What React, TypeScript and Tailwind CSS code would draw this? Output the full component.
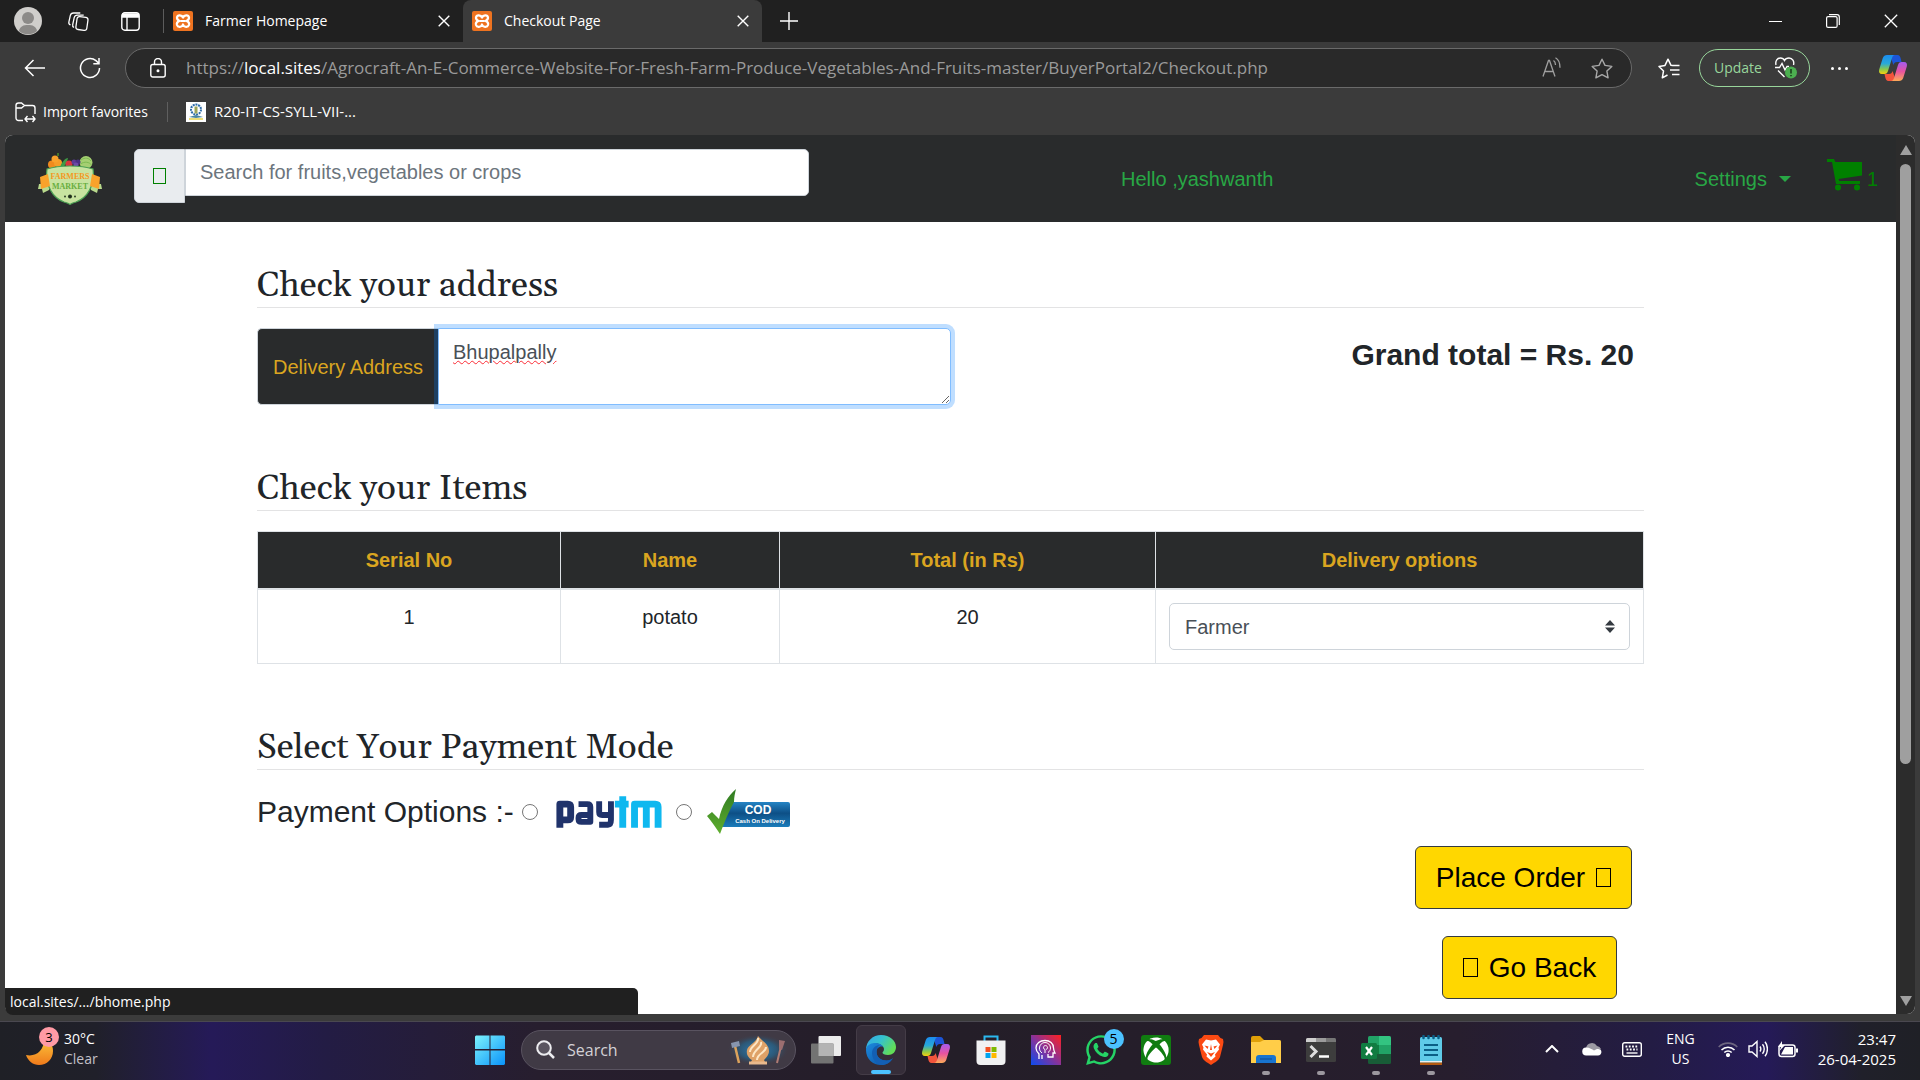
import React from "react";
import { FaWhatsapp, FaXbox } from "react-icons/fa";

const ui = "font-['Open_Sans',sans-serif]";

const TofuBox = ({ className }: { className: string }) => (
  <span aria-hidden="true" className={`inline-block shrink-0 border ${className}`} />
);

const XamppIcon = () => (
  <svg className="shrink-0" width="20" height="20" viewBox="0 0 20 20">
    <rect width="20" height="20" rx="2" fill="#ee7320" />
    <path
      d="M10 6.500C9 4 4.500 3.500 4 6.500 3.800 8.500 5.500 9.500 6.500 10 4.500 10.500 3.500 12 4 14c.7 2.500 5 2.500 6-.5 1 3 5.300 3 6 .5.500-2-.5-3.500-2.500-4 1-.5 2.700-1.500 2.500-3.500C15.500 3.500 11 4 10 6.500zM7.500 10h5"
      fill="none"
      stroke="#fff"
      strokeWidth="2.200"
      strokeLinejoin="round"
    />
  </svg>
);

const CloseX = ({ size = 12, width = 1.4 }: { size?: number; width?: number }) => (
  <svg width={size} height={size} viewBox="0 0 12 12" stroke="#fff" strokeWidth={width} fill="none">
    <path d="M.7.7l10.6 10.6M11.3.7L.7 11.3" />
  </svg>
);

const Copilot = ({ id }: { id: string }) => (
  <svg width="30" height="30" viewBox="0 0 30 30">
    <defs>
      <linearGradient id={`${id}a`} x1="0" y1="0" x2="0" y2="1">
        <stop offset="0" stopColor="#1b8cf0" />
        <stop offset=".45" stopColor="#28a9d8" />
        <stop offset=".75" stopColor="#8ac94b" />
        <stop offset="1" stopColor="#f7cf0d" />
      </linearGradient>
      <linearGradient id={`${id}b`} x1="0" y1="0" x2="0" y2="1">
        <stop offset="0" stopColor="#a45bf0" />
        <stop offset=".5" stopColor="#e8539f" />
        <stop offset="1" stopColor="#fdaa58" />
      </linearGradient>
    </defs>
    <path d="M13 2h6.500c2 0 2.600 1.500 3.200 3.500L23.500 9H19c-2 0-3 1-3.600 3L13 5z" fill="#1c55d8" />
    <path d="M17 28h-6.500c-2 0-2.600-1.500-3.200-3.500L6.500 21H11c2 0 3-1 3.600-3L17 25z" fill="#f2543c" />
    <path d="M9 2h8c-1.500 0-2.400 1.200-3 3l-4 13c-.6 2-1.600 3-3.500 3H4c-2.500 0-3.500-2-2.800-4.500l3.600-11.500C5.500 3 7 2 9 2z" fill={`url(#${id}a)`} />
    <path d="M21 28h-8c1.500 0 2.400-1.200 3-3l4-13c.6-2 1.600-3 3.500-3H26c2.500 0 3.500 2 2.800 4.500L25.200 25c-.7 2-2.200 3-4.200 3z" fill={`url(#${id}b)`} />
  </svg>
);

const Tab = ({ title, active }: { title: string; active?: boolean }) => (
  <div
    className={`flex h-full w-[299px] items-center pr-[11px] pl-[9px] text-white ${
      active ? "rounded-t-lg bg-[#3b3b3b]" : ""
    }`}
  >
    <XamppIcon />
    <span className="ml-3 flex-1 text-sm">{title}</span>
    <button aria-label={`Close ${title}`} className="flex size-4 items-center justify-center">
      <CloseX />
    </button>
  </div>
);

const TitleBar = () => (
  <div className="flex h-[42px] items-center bg-[#202020]">
    <div className="flex items-center pl-[14px]">
      <svg width="28" height="28" viewBox="0 0 28 28">
        <circle cx="14" cy="14" r="14" fill="#d0cecb" />
        <circle cx="14" cy="11" r="6" fill="#8c8a88" />
        <path d="M5 24c1-5 4.500-6 9-6s8 1 9 6a14 14 0 0 1-18 0z" fill="#8c8a88" />
      </svg>
      <svg className="ml-[25px]" width="22" height="22" viewBox="0 0 22 22" fill="none" stroke="#fff" strokeWidth="1.300">
        <rect x="9.500" y="7" width="11" height="13" rx="2.500" transform="rotate(8 15 13)" />
        <path d="M7 17.500c-1.200-.6-1.600-1.500-1.300-2.800l1.500-7c.4-1.800 1.400-2.600 3.200-2.600h6.300M3.500 15c-1.300-.6-2-1.600-1.600-3.200L3.300 5.600C3.700 3.800 4.800 3 6.500 3h6.800" />
      </svg>
      <svg className="ml-8" width="19" height="19" viewBox="0 0 19 19" fill="none" stroke="#fff" strokeWidth="1.400">
        <rect x=".8" y=".8" width="17.400" height="17.400" rx="3" />
        <path d="M1 3.500h17" strokeWidth="4.500" />
        <path d="M6 5v13" />
      </svg>
      <span className="ml-[23px] h-6 w-px bg-[#5c5c5c]" />
    </div>
    <Tab title="Farmer Homepage" />
    <Tab title="Checkout Page" active />
    <button aria-label="New tab" className="ml-[18px]">
      <svg width="18" height="18" viewBox="0 0 18 18" stroke="#fff" strokeWidth="1.400">
        <path d="M9 0v18M0 9h18" />
      </svg>
    </button>
    <div className="ml-auto flex items-center gap-11 pr-[22px]">
      <button aria-label="Minimize" className="h-px w-[13px] bg-white" />
      <button aria-label="Restore">
        <svg width="14" height="14" viewBox="0 0 14 14" fill="none" stroke="#fff" strokeWidth="1.200">
          <rect x=".6" y="2.600" width="10.500" height="10.800" rx="1.500" />
          <path d="M3 .7h8c1.400 0 2.300.9 2.300 2.300v8" />
        </svg>
      </button>
      <button aria-label="Close window">
        <CloseX size={14} width={1.1} />
      </button>
    </div>
  </div>
);

const Toolbar = () => (
  <div className="flex h-[52px] items-center">
    <button aria-label="Back" className="ml-6">
      <svg width="22" height="18" viewBox="0 0 22 18" fill="none" stroke="#fff" strokeWidth="1.500">
        <path d="M21 9H1.500M9.500 1L1.500 9l8 8" />
      </svg>
    </button>
    <button aria-label="Refresh" className="ml-[33px]">
      <svg width="22" height="22" viewBox="0 0 22 22" fill="none" stroke="#fff" strokeWidth="1.500">
        <path d="M20.500 11A9.500 9.500 0 1 1 17 3.600L20 6.500M20 1v5.700h-5.700" />
      </svg>
    </button>
    <div className="ml-6 flex h-10 flex-1 items-center rounded-full border border-[#6a6a6a] bg-[#292929] pr-[18px] pl-6">
      <svg className="shrink-0" width="16" height="20" viewBox="0 0 16 20" fill="none" stroke="#fff" strokeWidth="1.400">
        <rect x=".8" y="6.500" width="14.400" height="12.500" rx="2" />
        <path d="M4.500 6.500V4a3.500 3.500 0 0 1 7 0v2.500" />
        <circle cx="8" cy="12.700" r=".8" fill="#fff" />
      </svg>
      <p className="ml-5 flex-1 text-[17px] whitespace-nowrap text-[#9a9a9a]">
        https://<span className="text-white">local.sites</span>
        /Agrocraft-An-E-Commerce-Website-For-Fresh-Farm-Produce-Vegetables-And-Fruits-master/BuyerPortal2/Checkout.php
      </p>
      <button aria-label="Read aloud">
        <svg width="20" height="22" viewBox="0 0 20 22" fill="none" stroke="#a0a0a0" strokeWidth="1.300">
          <path d="M1 19.500L6.500 3.500h1L13 19.500M3 14.500h8M11.500 3.500c1.500 1 2 2.300 2 4.500M13.500.8c3 1.600 4.500 5.200 4.500 10" />
        </svg>
      </button>
      <button aria-label="Favorite" className="ml-[29px]">
        <svg width="22" height="21" viewBox="0 0 22 21" fill="none" stroke="#a8a8a8" strokeWidth="1.400" strokeLinejoin="round">
          <path d="M11 1.200l3 6.200 6.800 1-4.900 4.700 1.200 6.700L11 16.600l-6.100 3.200 1.200-6.700L1.200 8.400l6.800-1z" />
        </svg>
      </button>
    </div>
    <button aria-label="Favorites list" className="ml-[26px]">
      <svg width="22" height="21" viewBox="0 0 22 21" fill="none" stroke="#fff" strokeWidth="1.500" strokeLinejoin="round">
        <path d="M14.500 7.500L13 7.300 10 1.200 7 7.400l-6 1 4.500 4.700-1.200 6.700 5.200-2.800M14 7.500h7.500M12 12h9.500M14 16.500h7.500" />
      </svg>
    </button>
    <button className="ml-[19px] flex h-[38px] w-[111px] items-center justify-between rounded-full border border-[#98d69b] pr-3 pl-[14px] text-sm text-[#98d69b]">
      Update
      <svg width="23" height="22" viewBox="0 0 23 22" fill="none" stroke="#fff" strokeWidth="1.400">
        <path d="M2 8C1 3.500 3.500 1 6.500 1 8.500 1 10 2.500 10.500 3.500 11 2.500 12.800 1 15 1c3.500 0 5.500 3.500 4.500 7M1 10.500h4.500l2.500-4 3 6.500 2-3.500h2M4 13.500l6.500 6.500" />
        <circle cx="17" cy="15.500" r="6" fill="#4caf50" stroke="none" />
        <path d="M17 12v4.500M17 18v1.200" stroke="#173a18" strokeWidth="1.500" />
      </svg>
    </button>
    <button aria-label="More" className="ml-[21px] flex gap-1">
      <i className="size-[3px] rounded-full bg-white" />
      <i className="size-[3px] rounded-full bg-white" />
      <i className="size-[3px] rounded-full bg-white" />
    </button>
    <button aria-label="Copilot" className="mr-3 ml-[30px]">
      <Copilot id="top" />
    </button>
  </div>
);

const Favorites = () => (
  <div className="flex h-[41px] items-center pb-[5px] pl-[15px] text-sm text-white">
    <svg width="21" height="22" viewBox="0 0 21 22" fill="none" stroke="#fff" strokeWidth="1.400">
      <path d="M8 19.500H3.500A2.500 2.500 0 0 1 1 17V4.500A2.500 2.500 0 0 1 3.500 2h3l3 2.500h8A2.500 2.500 0 0 1 20 7v6M1 7h5.500l3-2.500M10 18h10M12.500 15L10 18l2.500 3M17.500 15l2.500 3-2.500 3" />
    </svg>
    <span className="ml-[7px]">Import favorites</span>
    <span className="ml-[19px] h-5 w-px bg-[#5f5f5f]" />
    <svg className="ml-[18px]" width="20" height="20" viewBox="0 0 20 20">
      <rect width="20" height="20" fill="#fff" />
      <circle cx="10" cy="7.500" r="5" fill="none" stroke="#2d6ca8" strokeWidth="2" strokeDasharray="2 .8" />
      <path d="M10 4.500v7" stroke="#9aa55a" strokeWidth="3" />
      <path d="M3 15l7-2 7 2-7 1z" fill="#4a86a0" />
      <path d="M3 17h14" stroke="#e6d34a" strokeWidth="1.500" />
    </svg>
    <span className="ml-2 text-[15px]">R20-IT-CS-SYLL-VII-...</span>
  </div>
);

const FarmersLogo = () => (
  <svg width="64" height="52" viewBox="0 0 64 52" role="img" aria-label="Farmers Market">
    <circle cx="48" cy="9.500" r="6.500" fill="#a5cf72" />
    <path d="M43 7c4-3 8-2 10 1M42.500 11c4-3 9-2 11 1" stroke="#7dba52" fill="none" />
    <circle cx="14" cy="11.500" r="4" fill="#f08a1c" />
    <circle cx="20" cy="10" r="4" fill="#f59d27" />
    <circle cx="17" cy="6" r="3.500" fill="#f9a22b" />
    <path d="M20 3V0" stroke="#4f8f2c" strokeWidth="1.500" />
    <path d="M22 14c2-5 5-9 8-9-1 4-2 7-5 9z" fill="#3f9a45" />
    <circle cx="31" cy="11" r="3.500" fill="#d9353b" />
    <circle cx="36" cy="9" r="2.500" fill="#5d3b96" />
    <circle cx="40" cy="9" r="2.500" fill="#4b2e83" />
    <circle cx="38" cy="12" r="2.500" fill="#6e49a8" />
    <path d="M1 31h10v6l-6 3-1-4H0zM63 31H53v6l6 3 1-4h4z" fill="#b8d98c" />
    <path d="M32 13c9 0 17 1 23 3 2 17-6 29-17 33-2 .6-4 1-6 2.500-2-1.500-4-1.900-6-2.500C15 45 7 33 9 16c6-2 14-3 23-3z" fill="#c8e3a0" stroke="#4ca154" strokeWidth="1.200" />
    <path d="M2 24l8-3 2 12-9 3zM62 24l-8-3-2 12 9 3z" fill="#f9a22b" />
    <text x="32" y="26" textAnchor="middle" fontSize="8" fontWeight="700" fill="#f5971e" fontFamily="Liberation Serif, serif">FARMERS</text>
    <text x="32" y="36" textAnchor="middle" fontSize="8" fontWeight="700" fill="#67ad3f" fontFamily="Liberation Serif, serif">MARKET</text>
    <circle cx="32" cy="43.500" r="2" fill="#20301c" />
    <circle cx="27" cy="43.500" r=".9" fill="#20301c" />
    <circle cx="37" cy="43.500" r=".9" fill="#20301c" />
  </svg>
);

const SiteNav = () => (
  <nav className="flex h-[87px] items-start bg-[#292b2c] text-xl text-[#28a745]">
    <a href="#home" className="mt-[18px] ml-[33px]">
      <FarmersLogo />
    </a>
    <form className="mt-[14px] ml-8 flex flex-[0_1_675px] items-start" onSubmit={(e) => e.preventDefault()}>
      <button aria-label="Search" className="flex h-[54px] w-[51px] items-center justify-center rounded-l-[5px] border border-[#ced4da] bg-[#e9ecef]">
        <TofuBox className="h-4 w-[13px] border-[#008000]" />
      </button>
      <input
        aria-label="Search products"
        placeholder="Search for fruits,vegetables or crops"
        className="h-[47px] min-w-0 flex-1 rounded-r-[5px] border border-[#ced4da] bg-white px-[14px] text-xl placeholder:text-[#6c757d]"
      />
    </form>
    <span className="mt-[30px] ml-[312px]">Hello ,yashwanth</span>
    <button className="mt-[30px] ml-auto flex items-center gap-3">
      Settings
      <i className="border-x-6 border-t-6 border-x-transparent border-t-[#28a745]" />
    </button>
    <a href="#cart" className="mt-6 mr-[18px] ml-9 flex items-start text-[#008000]">
      <svg width="36" height="32" viewBox="0 0 36 32" fill="#008000">
        <path d="M0 0h7l1.300 3H35v13.500L11.500 20l.8 2H33v3H9L5 3H0z" />
        <circle cx="11" cy="28.500" r="3" />
        <circle cx="30" cy="28.500" r="3" />
      </svg>
      <span className="mt-1.5 ml-1">1</span>
    </a>
  </nav>
);

const SectionTitle = ({ children }: { children: React.ReactNode }) => (
  <h2 className="border-b border-[#e3e3e4] font-[Georgia,Gelasio,'Liberation_Serif',serif] text-[35px] leading-[42px]">
    {children}
  </h2>
);

const cell = "border border-[#dee2e6] p-[13px] text-center align-top";

const Paytm = () => (
  <svg width="112" height="44" viewBox="0 0 114 44" role="img" aria-label="Paytm" fill="none" strokeWidth="7">
    <g stroke="#20336b" strokeLinejoin="round">
      <path d="M8 38V14h8c2 0 3 1 3 3v10c0 2-1 3-3 3H9" />
      <path d="M27 14h9c2 0 3 1 3 3v15H30c-2 0-3-1-3-3v-1c0-2 1-3 3-3h9" strokeWidth="6" />
      <path d="M48 11v11c0 2 1 3 3 3h8M60 11v19c0 3-1 5-3 5h-9" strokeWidth="6" />
    </g>
    <g stroke="#0fb8ef" strokeLinejoin="round">
      <path d="M64 14h14M72 6v32" />
      <path d="M84 38V14h21c2 0 3 1 3 3v21M96 14v24" />
    </g>
  </svg>
);

const Cod = () => (
  <svg width="88" height="46" viewBox="0 0 88 46" role="img" aria-label="Cash on delivery">
    <defs>
      <linearGradient id="codblue" x1="0" y1="0" x2="0" y2="1">
        <stop offset="0" stopColor="#2584c4" />
        <stop offset=".45" stopColor="#0d4f86" />
        <stop offset="1" stopColor="#1b7cba" />
      </linearGradient>
      <linearGradient id="codgreen" x1="0" y1="0" x2="0" y2="1">
        <stop offset="0" stopColor="#2f7a22" />
        <stop offset="1" stopColor="#5fae2e" />
      </linearGradient>
    </defs>
    <path d="M22 13h62a2 2 0 0 1 2 2v21a2 2 0 0 1-2 2H17z" fill="url(#codblue)" />
    <path d="M3 27l5-4 7 7C18 16 24 7 32 0c-1 4-2 8-2 13-5 9-9 19-14 32C12 39 8 33 3 27z" fill="url(#codgreen)" />
    <text x="54" y="25" textAnchor="middle" fontSize="12" fontWeight="700" fill="#fff" fontFamily="Liberation Sans, sans-serif">COD</text>
    <text x="56" y="34" textAnchor="middle" fontSize="6" fontWeight="700" fill="#fff" fontFamily="Liberation Sans, sans-serif">Cash On Delivery</text>
  </svg>
);

const radio = "size-4 shrink-0 appearance-none rounded-full border border-[#767676] bg-white";
const gold = "flex h-[63px] items-center rounded-md border border-[#343a40] bg-[#ffd700] text-[28px] whitespace-nowrap text-black";

const Checkout = () => (
  <main className="mx-auto w-full max-w-[1387px] pt-[43px] text-xl text-[#212529]">
    <SectionTitle>Check your address</SectionTitle>
    <div className="mt-5 flex justify-between">
      <div className="flex h-[77px] w-1/2">
        <label htmlFor="address" className="flex w-[181px] items-center justify-center rounded-l-[5px] border border-r-0 border-[#ced4da] bg-[#292b2c] text-[#daa520]">
          Delivery Address
        </label>
        <textarea
          id="address"
          defaultValue="Bhupalpally"
          spellCheck={false}
          className="relative min-w-0 flex-1 rounded-r-[5px] border border-[#80bdff] bg-white px-[14px] py-2 leading-[30px] text-[#495057] underline decoration-red-500 decoration-wavy decoration-1 shadow-[0_0_0_4px_rgba(0,123,255,0.25)] outline-none"
        />
      </div>
      <p className="mt-[9px] mr-[10px] text-3xl font-bold">Grand total = Rs. 20</p>
    </div>

    <div className="mt-[63px]">
      <SectionTitle>Check your Items</SectionTitle>
    </div>
    <table className="mt-5 w-full table-fixed border-collapse">
      <colgroup>
        <col className="w-[303px]" />
        <col className="w-[219px]" />
        <col className="w-[376px]" />
        <col />
      </colgroup>
      <thead className="bg-[#292b2c] text-[#daa520]">
        <tr>
          {["Serial No", "Name", "Total (in Rs)", "Delivery options"].map((h) => (
            <th key={h} className="border border-b-2 border-[#dee2e6] px-[14px] py-[13px] leading-[30px]">
              {h}
            </th>
          ))}
        </tr>
      </thead>
      <tbody>
        <tr>
          <td className={cell}>1</td>
          <td className={cell}>potato</td>
          <td className={cell}>20</td>
          <td className={cell}>
            <div className="relative flex">
              <select aria-label="Delivery option" className="h-[47px] w-full appearance-none rounded-[5px] border border-[#ced4da] bg-white px-[15px] text-[#495057]">
                <option>Farmer</option>
              </select>
              <svg className="pointer-events-none absolute top-[17px] right-[15px]" width="10" height="13" viewBox="0 0 10 13" fill="#343a40">
                <path d="M0 5.500L5 0l5 5.500zM0 7.500L5 13l5-5.500z" />
              </svg>
            </div>
          </td>
        </tr>
      </tbody>
    </table>

    <div className="mt-[63px]">
      <SectionTitle>Select Your Payment Mode</SectionTitle>
    </div>
    <div className="mt-[19px] flex h-[46px] items-center">
      <span className="text-3xl">Payment Options :-</span>
      <label className="ml-2 flex items-center">
        <input type="radio" name="pay" className={radio} />
        <span className="ml-[14px]">
          <Paytm />
        </span>
      </label>
      <label className="ml-3 flex items-center">
        <input type="radio" name="pay" className={radio} />
        <span className="ml-3">
          <Cod />
        </span>
      </label>
    </div>
    <div className="mt-[11px] mr-3 ml-auto flex w-[217px] flex-col items-center gap-[27px]">
      <button className={`w-full justify-center ${gold}`}>
        Place Order <TofuBox className="ml-[11px] h-[19px] w-[15px] border-black" />
      </button>
      <button className={`ml-3 w-[175px] justify-center ${gold}`}>
        <TofuBox className="mr-[11px] h-[19px] w-[15px] border-black" /> Go Back
      </button>
    </div>
  </main>
);

const Slot = ({ children, label, dot, active }: { children: React.ReactNode; label: string; dot?: boolean; active?: boolean }) => (
  <button aria-label={label} className="flex w-[55px] items-center justify-center">
    <span className={`relative flex size-[50px] items-center justify-center rounded-md ${active ? "border border-[#443c47] bg-[#352d39]" : ""}`}>
      {children}
      {dot && <i className="absolute bottom-0 h-1 w-2 rounded-full bg-[#9c989f]" />}
      {active && <i className="absolute bottom-0 h-1 w-5 rounded-full bg-[#4cc2ff]" />}
    </span>
  </button>
);

const Taskbar = () => (
  <footer className={`grid h-[59px] grid-cols-[1fr_auto_1fr] items-center border-t border-[#4a4850] bg-[linear-gradient(90deg,#1f2026_0%,#20202a_5%,#251a58_11%,#231c44_17%,#271e2e_28%,#241e28_50%,#271e2e_76%,#231c44_86%,#251a58_92%,#20202a_97%,#1f2026_100%)] pb-[3px] text-white ${ui}`}>
    <div className="flex items-center pb-px pl-[26px] text-[15px] leading-5">
      <div className="relative h-10 w-7">
        <svg className="mt-[10px]" width="28" height="28" viewBox="0 0 28 28">
          <defs>
            <linearGradient id="moon" x1="0" y1="0" x2="0" y2="1">
              <stop offset="0" stopColor="#fbc63c" />
              <stop offset="1" stopColor="#f07a1b" />
            </linearGradient>
          </defs>
          <path d="M0 16c10 2 18-4 18-16 6 2 9 6 9 12 0 8-6 14-14 14C7 26 2 22 0 16z" fill="url(#moon)" />
        </svg>
        <span className="absolute -top-0.5 left-[13px] flex size-5 items-center justify-center rounded-full bg-[#ff9aa5] text-[13px] text-black">3</span>
      </div>
      <p className="ml-[10px] text-sm leading-5">
        30°C
        <br />
        <span className="text-[#c3c0c8]">Clear</span>
      </p>
    </div>

    <div className="flex items-center">
      <Slot label="Start">
        <svg width="30" height="30" viewBox="0 0 30 30">
          <defs>
            <linearGradient id="win" x1="0" y1="0" x2="1" y2="1">
              <stop offset="0" stopColor="#7df3fd" />
              <stop offset="1" stopColor="#0a93fa" />
            </linearGradient>
          </defs>
          <path d="M1 .5h13.500V14H0V1.500zM15.500.5H29l1 1V14H15.500zM0 15.500h14.500V30H1l-1-1zM15.500 15.500H30V29l-1 1H15.500z" fill="url(#win)" />
        </svg>
      </Slot>
      <div className="mr-0.5 ml-1 flex h-10 w-[275px] items-center rounded-full border border-[#595360] bg-[#403a45] pr-[6px] pl-[14px]">
        <svg width="19" height="19" viewBox="0 0 19 19" fill="none" stroke="#ededf0" strokeWidth="2">
          <circle cx="8" cy="8" r="6.800" fill="#5a5560" />
          <path d="M13 13l5 5" strokeWidth="2.500" />
        </svg>
        <input aria-label="Search" placeholder="Search" className="ml-3 min-w-0 flex-1 bg-transparent text-base placeholder:text-[#d3d1d6]" />
        <svg width="62" height="32" viewBox="0 0 62 32">
          <defs>
            <radialGradient id="glow">
              <stop offset="0" stopColor="#2f7cb0" />
              <stop offset=".6" stopColor="#2c5877" />
              <stop offset="1" stopColor="#403a45" stopOpacity="0" />
            </radialGradient>
          </defs>
          <ellipse cx="31" cy="16" rx="31" ry="16" fill="url(#glow)" />
          <path d="M8 12l4 17" stroke="#dba35c" strokeWidth="2.500" />
          <path d="M4 9l8-2 1 5-8 2z" fill="#8795ae" />
          <path d="M55 8l-5 21" stroke="#b07c74" strokeWidth="2" />
          <path d="M52 6l6 1-3 9-3-1z" fill="#9b6e70" />
          <path d="M31 2c4 5 11 8 11 15 0 4-3 7-5 9l2 4H23l2-4c-3-2-6-5-5-10 1-5 9-7 11-14z" fill="#dfa267" />
          <path d="M31 4c1 6-8 8-8 14M34 8c2 5-8 8-8 15M39 13c0 6-9 6-9 13" stroke="#fde6c4" strokeWidth="2" fill="none" />
          <path d="M22 29h18" stroke="#e9b98c" strokeWidth="3" />
        </svg>
      </div>
      <Slot label="Task view">
        <svg width="30" height="28" viewBox="0 0 30 28">
          <rect x="7.500" y="0" width="22.500" height="20" rx="1" fill="#ececec" />
          <rect y="7.500" width="22.500" height="20" rx="1" fill="#737373" />
          <rect x="7.500" y="7.500" width="15" height="12.500" fill="#b4b4b4" />
        </svg>
      </Slot>
      <Slot label="Edge" active>
        <svg width="30" height="30" viewBox="0 0 30 30">
          <defs>
            <linearGradient id="edgetop" x1="0" y1="0" x2="1" y2=".5">
              <stop offset="0" stopColor="#35a5e8" />
              <stop offset=".5" stopColor="#35c1cf" />
              <stop offset="1" stopColor="#62dd58" />
            </linearGradient>
            <linearGradient id="edgebot" x1="0" y1="0" x2="1" y2="1">
              <stop offset="0" stopColor="#1c8ade" />
              <stop offset="1" stopColor="#0b4fa0" />
            </linearGradient>
          </defs>
          <path d="M0 15C0 6 7 0 15 0c9 0 15 6 15 12 0 5-3.500 8-8 8-3.500 0-5.500-1.300-5.500-2.300 0-.8 1.500-1.300 1.500-3.700C18 11 14 8.500 10 8.500c-5 0-9 3-10 6.500z" fill="url(#edgetop)" />
          <path d="M0 15c0-4 4-7 9-7 4 0 7 1.500 8.300 4C14 10.500 10.500 13 10.500 17c0 5 4.500 8.500 10 8.500 3 0 5-1 6.500-2.500C24.500 27.500 20 30 15 30 7 30 0 24 0 15z" fill="url(#edgebot)" />
          <path d="M6 18c0-4 3-8 8-8-2.500 1.500-3.500 4-3.500 7 0 5 4.500 8.500 10 8.500 3 0 5-1 6.500-2.500-2.500 4.500-7 7-11 7C9 29 6 23 6 18z" fill="#135fb4" />
        </svg>
      </Slot>
      <Slot label="Copilot">
        <Copilot id="task" />
      </Slot>
      <Slot label="Store">
        <svg width="30" height="30" viewBox="0 0 30 30">
          <path d="M8.500 7V1.500h13V7" fill="none" stroke="#2bb8ee" strokeWidth="2" />
          <path d="M.5 5.500h29V26a4 4 0 0 1-4 4h-21a4 4 0 0 1-4-4z" fill="#f1f1f2" />
          <path d="M9.500 12h5v5h-5z" fill="#f25022" />
          <path d="M15.500 12h5v5h-5z" fill="#7fba00" />
          <path d="M9.500 18h5v5h-5z" fill="#00a4ef" />
          <path d="M15.500 18h5v5h-5z" fill="#ffb900" />
        </svg>
      </Slot>
      <Slot label="Assistant">
        <svg width="30" height="30" viewBox="0 0 30 30" fill="none" stroke="#fff">
          <defs>
            <linearGradient id="asst" x1="0" y1="1" x2="1" y2="0">
              <stop offset="0" stopColor="#0b4cf0" />
              <stop offset=".5" stopColor="#8a3298" />
              <stop offset="1" stopColor="#ff2020" />
            </linearGradient>
          </defs>
          <rect width="30" height="30" fill="url(#asst)" stroke="none" />
          <path d="M8 24v-5c-2-2-3-4-3-6 0-4.500 4-7.500 9-7.500s8.500 3 8.500 7.500c0 2 .5 3 1.500 5h-2v4h-5v-3M11 24v-4" strokeWidth="1.300" />
          <path d="M11 18c-2-1.500-2.500-3-2.500-5a5.500 5.500 0 0 1 11 0c0 2-1 3.500-2.500 4.500M14 18v-3.500a2 2 0 1 1 1 0" strokeWidth="1" />
        </svg>
      </Slot>
      <Slot label="WhatsApp">
        <FaWhatsapp className="size-[34px] text-[#25d366]" />
        <span className="absolute top-1 right-0.5 flex size-5 items-center justify-center rounded-full bg-[#4cc2ff] text-sm text-black">5</span>
      </Slot>
      <Slot label="Xbox">
        <span className="flex size-[30px] items-center justify-center rounded-[3px] bg-[#107c10]">
          <FaXbox className="size-[26px] text-white" />
        </span>
      </Slot>
      <Slot label="Brave">
        <svg width="26" height="30" viewBox="0 0 26 30">
          <path d="M6 0h14l2.500 3L25 4l.5 3-.5 3-3 12c-1 3-5 5.500-9 8-4-2.500-8-5-9-8L1 10 .5 7 1 4l2.500-1z" fill="#fb4a13" />
          <path d="M8 4.500l5 1 5-1 4 5-1.500 3 .5 2-4 5 .5 2-4.500 4-4.500-4 .5-2-4-5 .5-2L4 9.500z" fill="#fff" />
          <path d="M6.500 10.500l4 1-1 2.500zM19.500 10.500l-4 1 1 2.500zM13 9l1 6h-2zM9 17l4 1.500L17 17l-4 5z" fill="#fb4a13" />
        </svg>
      </Slot>
      <Slot label="File Explorer" dot>
        <svg width="30" height="28" viewBox="0 0 30 28">
          <path d="M0 2a2 2 0 0 1 2-2h7l4 4h15a2 2 0 0 1 2 2v6H0z" fill="#e0a008" />
          <path d="M0 6h9l4-2h15a2 2 0 0 1 2 2v21H0z" fill="#ffcd48" />
          <path d="M5 27v-5a3 3 0 0 1 3-3h14a3 3 0 0 1 3 3v5z" fill="#1874cf" />
          <path d="M9 23h12" stroke="#0c4a93" />
        </svg>
      </Slot>
      <Slot label="Terminal" dot>
        <svg width="30" height="24" viewBox="0 0 30 24">
          <rect width="30" height="24" rx="1.500" fill="#3d3d3d" />
          <path d="M0 4V1.500A1.500 1.500 0 0 1 1.500 0H10v4z" fill="#cfcfcf" />
          <path d="M10 0h10v4H10z" fill="#9b9b9b" />
          <path d="M20 0h8.500A1.500 1.500 0 0 1 30 1.500V4H20z" fill="#767676" />
          <path d="M4.500 8l5.500 5.500L4.500 19" fill="none" stroke="#ddd" strokeWidth="3" />
          <path d="M13 18.500h10" stroke="#fff" strokeWidth="2.500" />
        </svg>
      </Slot>
      <Slot label="Excel" dot>
        <svg width="30" height="28" viewBox="0 0 30 28">
          <path d="M7 1.500A1.500 1.500 0 0 1 8.500 0H18v9H7z" fill="#21a366" />
          <path d="M18 0h10.500A1.500 1.500 0 0 1 30 1.500V9H18z" fill="#33c481" />
          <path d="M7 9h11v9H7z" fill="#107c41" />
          <path d="M18 9h12v9H18z" fill="#21a366" />
          <path d="M7 18h23v8.500a1.500 1.500 0 0 1-1.500 1.500h-20A1.500 1.500 0 0 1 7 26.500z" fill="#185c37" />
          <rect y="7" width="16" height="16" rx="1.500" fill="#107c41" />
          <path d="M5 11l6 8M11 11l-6 8" stroke="#fff" strokeWidth="2.200" />
        </svg>
      </Slot>
      <Slot label="Notepad" dot>
        <svg width="22" height="30" viewBox="0 0 22 30">
          <rect y="2" width="22" height="27" rx="1.500" fill="#5fcbe8" />
          <path d="M0 26h22v1.500H0z" fill="#eee" />
          <path d="M0 27.500h22V30H0z" fill="#b35a12" />
          <path d="M4 10h14M4 15h14M4 20h14" stroke="#0b5f86" strokeWidth="2" />
          <path d="M3.500 1v2M8.500 1v2M13.500 1v2M18.500 1v2" stroke="#0b5f86" strokeWidth="2.500" strokeLinecap="round" />
        </svg>
      </Slot>
    </div>

    <div className="flex items-center justify-end pr-6 pb-px text-[15px] leading-5">
      <svg width="14" height="8" viewBox="0 0 14 8" fill="none" stroke="#fff" strokeWidth="2">
        <path d="M1 7l6-6 6 6" />
      </svg>
      <svg className="ml-[23px]" width="20" height="14" viewBox="0 0 20 14">
        <path d="M4 6a6 6 0 0 1 11-2 5 5 0 0 1 4 3l-9 3z" fill="#9c9aa3" />
        <path d="M4.500 13.500A4 4 0 0 1 4 5.500c4 0 6 2 8 3 2-1.500 4-2 6.500-1 2 2.500.5 6-2.500 6z" fill="#fff" />
      </svg>
      <svg className="ml-5" width="20" height="15" viewBox="0 0 20 15" fill="none" stroke="#fff" strokeWidth="1.400">
        <rect x=".7" y=".7" width="18.600" height="13.600" rx="2" />
        <path d="M3.500 4.500h13M4.500 7.500h11" strokeDasharray="1.800 1.500" strokeWidth="1.800" />
        <path d="M4.500 11h11" />
      </svg>
      <span className="ml-6 text-center text-sm leading-5">
        ENG
        <br />
        US
      </span>
      <svg className="ml-[23px]" width="20" height="16" viewBox="0 0 20 16" fill="none" stroke="#fff" strokeWidth="1.600">
        <path d="M.7 6a13 13 0 0 1 18.600 0" stroke="#6d6680" />
        <path d="M3.500 9a9 9 0 0 1 13 0M6.300 11.500a5.500 5.500 0 0 1 7.400 0" />
        <circle cx="10" cy="14" r="1.300" fill="#fff" />
      </svg>
      <svg className="ml-[10px]" width="20" height="18" viewBox="0 0 20 18" fill="none" stroke="#fff" strokeWidth="1.400">
        <path d="M1 6h3l5-4.500v15L4 12H1zM12 6.500c1 1.500 1 3.500 0 5M14.500 4.200c2.300 2.700 2.300 6.900 0 9.600M17 1.800c3.200 4 3.200 10.400 0 14.400" />
      </svg>
      <svg className="ml-[10px]" width="20" height="17" viewBox="0 0 20 17">
        <rect x="1" y="4" width="16" height="11.500" rx="2.500" fill="none" stroke="#fff" strokeWidth="1.500" />
        <path d="M7 6h8v7.500H3zM18 7.500h2v4h-2zM4 0L0 6h3L1.500 10 7 4H4z" fill="#fff" />
      </svg>
      <span className="ml-5 text-right">
        23:47
        <br />
        26-04-2025
      </span>
    </div>
  </footer>
);

export default function App() {
  return (
    <div className={`flex h-screen flex-col overflow-hidden bg-[#3b3b3b] ${ui}`}>
      <header>
        <TitleBar />
        <Toolbar />
        <Favorites />
      </header>
      <div className="mr-[5px] mb-[7px] ml-[5px] flex min-h-0 flex-1 overflow-hidden rounded-lg bg-white font-['Liberation_Sans',Arial,sans-serif]">
        <div className="min-w-0 flex-1 overflow-hidden">
          <SiteNav />
          <Checkout />
        </div>
        <div className="flex w-[19px] flex-col items-center bg-[#2c2c2c] pt-[10px] pb-2">
          <i className="border-x-6 border-b-10 border-x-transparent border-b-[#9f9f9f]" />
          <div className="mt-[9px] h-[600px] w-[11px] rounded-full bg-[#9f9f9f]" />
          <i className="mt-auto border-x-6 border-t-10 border-x-transparent border-t-[#9f9f9f]" />
        </div>
      </div>
      <Taskbar />
      <div className="absolute bottom-[65px] left-[5px] flex h-[27px] w-[633px] items-center rounded-tr-[5px] rounded-bl-lg bg-[#202020] pl-[5px] text-sm text-white">
        local.sites/.../bhome.php
      </div>
    </div>
  );
}
